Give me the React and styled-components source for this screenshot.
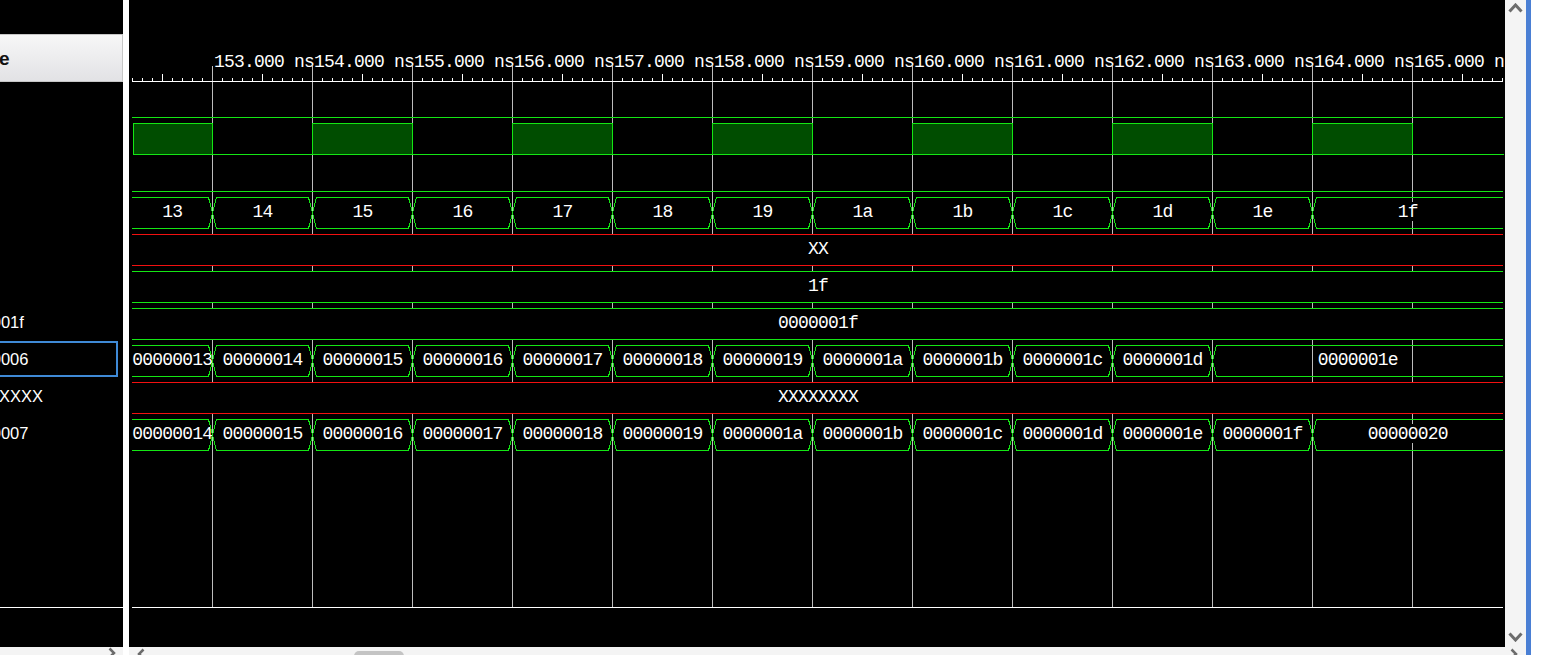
import React from 'react';
import styled, { createGlobalStyle } from 'styled-components';

const GlobalStyle = createGlobalStyle`
	html, body {
		margin: 0;
		padding: 0;
		background: #ffffff;
		overflow: hidden;
	}
	body {
		font-family: "Liberation Sans", Arial, sans-serif;
	}
`;

// wave canvas geometry, in page coordinates (the viewBox starts at CANVAS_X)
const CANVAS_X = 129;
const CANVAS_W = 1376;
const CANVAS_H = 647;
const WAVE_L = 132;
const WAVE_R = 1503;
const FIRST_ROW = 86;
const ROW_PITCH = 37;
const ROW_H = 31;
const GRID_FIRST = 212;
const GRID_STEP = 100;
const GRID_COUNT = 13;
const GRID_TOP = 66;
const GRID_BOTTOM = 607;
const RULER_Y = 81;
const CHAR_W = 10;

const GREEN = '#14e614';
const DARK_GREEN = '#004d00';
const RED = '#f21010';
const GRID = '#bdbdbd';

const rowTop = (i) => FIRST_ROW + ROW_PITCH * i;
const gridX = (k) => GRID_FIRST + GRID_STEP * k;

const hexRange = (from, count, pad) =>
	Array.from({ length: count }, (_, i) => (from + i).toString(16).padStart(pad, '0'));

const signals = [
	{ kind: 'low' },
	{ kind: 'clock' },
	{ kind: 'low' },
	{ kind: 'bus', values: hexRange(0x13, 13, 2) },
	{ kind: 'const', value: 'XX', color: RED },
	{ kind: 'const', value: '1f', color: GREEN },
	{ kind: 'const', value: '0000001f', color: GREEN },
	{ kind: 'bus', values: hexRange(0x13, 12, 8) },
	{ kind: 'const', value: 'XXXXXXXX', color: RED },
	{ kind: 'bus', values: hexRange(0x14, 13, 8) },
];

// value column is scrolled right, so short values are out of view
const values = ['', '', '', '', '', '', '0000001f', '00000006', 'XXXXXXXX', '00000007'];
const SELECTED = 7;

/* ---------- page frame ---------- */

const Window = styled.div`
	display: flex;
	width: 1545px;
	height: 655px;
	background: #ffffff;
	overflow: hidden;
`;

const ValuePane = styled.div`
	width: 123px;
	flex-shrink: 0;
	display: flex;
	flex-direction: column;
	background: #000000;
	overflow: hidden;
`;

const PaneTop = styled.div`
	height: 34px;
	flex-shrink: 0;
`;

const ColumnHeader = styled.div`
	height: 48px;
	flex-shrink: 0;
	box-sizing: border-box;
	display: flex;
	align-items: center;
	border: 1px solid #c6c6c6;
	border-left: none;
	background: linear-gradient(#f7f7f7, #e2e2e5);
	overflow: hidden;
	white-space: nowrap;
`;

const HeaderLabel = styled.span`
	margin-left: -40px;
	padding-top: 1px;
	font: bold 19px "Liberation Sans", Arial, sans-serif;
	color: #111111;
`;

const ValueList = styled.div`
	flex: 1;
	display: flex;
	flex-direction: column;
	overflow: hidden;
`;

const ValueRow = styled.div`
	height: 37px;
	flex-shrink: 0;
	display: flex;
	align-items: flex-start;
`;

const ValueBox = styled.div`
	width: 122px;
	height: 36px;
	margin-left: -4px;
	padding-top: 1px;
	box-sizing: border-box;
	display: flex;
	align-items: center;
	border: 2px solid ${(p) => (p.$selected ? '#3f8ad6' : 'transparent')};
	overflow: hidden;
	white-space: nowrap;
`;

const ValueText = styled.span`
	margin-left: -43px;
	font-size: 16.5px;
	color: #ffffff;
`;

const EndLine = styled.div`
	height: 1px;
	flex-shrink: 0;
	background: #ffffff;
`;

const PaneFoot = styled.div`
	height: 39px;
	flex-shrink: 0;
`;

const HScroll = styled.div`
	height: 8px;
	flex-shrink: 0;
	display: flex;
	align-items: flex-start;
	justify-content: ${(p) => (p.$end ? 'flex-end' : 'flex-start')};
	padding: 0 ${(p) => (p.$end ? '7px' : '0')} 0 0;
	background: #f4f4f4;
	overflow: hidden;
`;

const Splitter = styled.div`
	width: 6px;
	flex-shrink: 0;
	background: #ffffff;
`;

const WavePane = styled.div`
	width: 1397px;
	flex-shrink: 0;
	display: flex;
	flex-direction: column;
`;

const WaveBody = styled.div`
	height: ${CANVAS_H}px;
	display: flex;
`;

const WaveCanvas = styled.svg`
	display: block;
	flex-shrink: 0;
	background: #000000;
`;

const VScroll = styled.div`
	width: 21px;
	flex-shrink: 0;
	box-sizing: border-box;
	display: flex;
	flex-direction: column;
	justify-content: space-between;
	align-items: center;
	padding: 3px 0 5px;
	background: #f4f4f4;
`;

const Track = styled.div`
	flex: 1;
	display: flex;
	align-items: flex-start;
	padding-top: 4px;
`;

const Thumb = styled.div`
	width: 50px;
	height: 10px;
	margin-left: ${(p) => p.$offset}px;
	border-radius: 5px;
	background: #c4c4c4;
`;

const ArrowSlot = styled.div`
	display: flex;
	margin: 1px ${(p) => p.$right || 0}px 0 ${(p) => p.$left || 0}px;
`;

const FocusEdge = styled.div`
	width: 5px;
	flex-shrink: 0;
	background: #4a7fd4;
`;

const WaveText = styled.text`
	font-family: "Liberation Mono", "DejaVu Sans Mono", monospace;
	font-size: 18px;
	letter-spacing: -0.8px;
	fill: #ffffff;
`;

/* ---------- small drawings ---------- */

const Chevron = ({ dir, size = 15, color = '#6c6c6c', weight = 3 }) => {
	const h = Math.round(size * 0.66);
	const pts = {
		up: `1.5,${h - 1.5} ${size / 2},2 ${size - 1.5},${h - 1.5}`,
		down: `1.5,1.5 ${size / 2},${h - 2} ${size - 1.5},1.5`,
		left: `${h - 1.5},1.5 2,${size / 2} ${h - 1.5},${size - 1.5}`,
		right: `1.5,1.5 ${h - 2},${size / 2} 1.5,${size - 1.5}`,
	}[dir];
	const horizontal = dir === 'up' || dir === 'down';
	return (
		<svg
			width={horizontal ? size : h}
			height={horizontal ? h : size}
			viewBox={`0 0 ${horizontal ? size : h} ${horizontal ? h : size}`}
		>
			<polyline points={pts} fill="none" stroke={color} strokeWidth={weight} />
		</svg>
	);
};

/* ---------- wave pieces ---------- */

const Ruler = () => {
	const ticks = [];
	for (let x = WAVE_L; x < WAVE_R; x += 10) {
		if ((x - GRID_FIRST) % GRID_STEP === 0) continue;
		const tall = (x - GRID_FIRST - 50) % GRID_STEP === 0;
		ticks.push(
			<line key={x} x1={x + 0.5} x2={x + 0.5} y1={tall ? 74 : 78} y2={RULER_Y} stroke="#ffffff" />
		);
	}
	const labels = Array.from({ length: GRID_COUNT + 1 }, (_, i) => (
		<WaveText key={i} x={gridX(i) + 2} y={67}>
			{`${153 + i}.000 ns`}
		</WaveText>
	));
	return (
		<g>
			<line x1={WAVE_L} x2={WAVE_R} y1={RULER_Y + 0.5} y2={RULER_Y + 0.5} stroke="#ffffff" />
			{ticks}
			{labels}
		</g>
	);
};

const GridLines = () => (
	<g>
		{Array.from({ length: GRID_COUNT }, (_, k) => (
			<line
				key={k}
				x1={gridX(k) + 0.5}
				x2={gridX(k) + 0.5}
				y1={GRID_TOP}
				y2={GRID_BOTTOM}
				stroke={GRID}
			/>
		))}
	</g>
);

// value text is painted opaque, hiding the grid behind it
const ValueLabel = ({ x, top, children }) => {
	const w = String(children).length * CHAR_W;
	return (
		<g>
			<rect x={x - w / 2} y={top + 5} width={w} height={19} fill="#000000" />
			<WaveText x={x} y={top + 20} textAnchor="middle">
				{children}
			</WaveText>
		</g>
	);
};

const LowWave = ({ top }) => (
	<line x1={WAVE_L} x2={WAVE_R} y1={top + ROW_H + 0.5} y2={top + ROW_H + 0.5} stroke={GREEN} />
);

const ClockWave = ({ top }) => {
	const hi = top + 0.5;
	const lo = top + ROW_H + 0.5;
	const parts = [];
	for (let k = -1; k < GRID_COUNT; k += 2) {
		const a = k < 0 ? WAVE_L + 1 : gridX(k);
		const b = gridX(k + 1);
		parts.push(
			<rect key={`h${k}`} x={a + 0.5} y={hi} width={b - a} height={ROW_H} fill={DARK_GREEN} stroke={GREEN} />
		);
		const c = k + 2 < GRID_COUNT ? gridX(k + 2) : WAVE_R;
		parts.push(<line key={`l${k}`} x1={b + 0.5} x2={c + 0.5} y1={lo} y2={lo} stroke={GREEN} />);
	}
	return <g>{parts}</g>;
};

const busPath = (a, b, top, first, last) => {
	const t = top + 0.5;
	const bt = top + ROW_H + 0.5;
	const m = top + ROW_H / 2 + 0.5;
	let d = first ? `M${a},${t}` : `M${a},${m}L${a + 4},${t}`;
	d += last ? `L${b},${t}M${b},${bt}` : `L${b - 4},${t}L${b},${m}L${b - 4},${bt}`;
	d += first ? `L${a},${bt}` : `L${a + 4},${bt}L${a},${m}`;
	return d;
};

const BusWave = ({ top, values: vals }) => {
	const segs = vals.map((v, i) => {
		const first = i === 0;
		const last = i === vals.length - 1;
		const a = first ? WAVE_L : gridX(i - 1) + 0.5;
		const b = last ? WAVE_R : gridX(i) + 0.5;
		return { v, a, b, first, last };
	});
	return (
		<g>
			{segs.map((s, i) => (
				<ValueLabel key={`t${i}`} x={(s.a + s.b) / 2} top={top}>
					{s.v}
				</ValueLabel>
			))}
			{segs.map((s, i) => (
				<path key={`p${i}`} d={busPath(s.a, s.b, top, s.first, s.last)} fill="none" stroke={GREEN} />
			))}
		</g>
	);
};

const ConstWave = ({ top, value, color }) => (
	<g>
		<rect x={WAVE_L} y={top + 1} width={WAVE_R - WAVE_L} height={ROW_H - 1} fill="#000000" />
		<line x1={WAVE_L} x2={WAVE_R} y1={top + 0.5} y2={top + 0.5} stroke={color} />
		<line x1={WAVE_L} x2={WAVE_R} y1={top + ROW_H + 0.5} y2={top + ROW_H + 0.5} stroke={color} />
		<ValueLabel x={(WAVE_L + WAVE_R) / 2 + 0.5} top={top}>
			{value}
		</ValueLabel>
	</g>
);

const Signal = ({ signal, index }) => {
	const top = rowTop(index);
	if (signal.kind === 'low') return <LowWave top={top} />;
	if (signal.kind === 'clock') return <ClockWave top={top} />;
	if (signal.kind === 'bus') return <BusWave top={top} values={signal.values} />;
	return <ConstWave top={top} value={signal.value} color={signal.color} />;
};

export default function App() {
	return (
		<Window>
			<GlobalStyle />
			<ValuePane>
				<PaneTop />
				<ColumnHeader>
					<HeaderLabel>Value</HeaderLabel>
				</ColumnHeader>
				<ValueList>
					{values.map((v, i) => (
						<ValueRow key={i}>
							<ValueBox $selected={i === SELECTED}>
								{v && <ValueText>{v}</ValueText>}
							</ValueBox>
						</ValueRow>
					))}
				</ValueList>
				<EndLine />
				<PaneFoot />
				<HScroll $end>
					<Chevron dir="right" size={12} weight={2.5} />
				</HScroll>
			</ValuePane>
			<Splitter />
			<WavePane>
				<WaveBody>
					<WaveCanvas
						width={CANVAS_W}
						height={CANVAS_H}
						viewBox={`${CANVAS_X} 0 ${CANVAS_W} ${CANVAS_H}`}
						shapeRendering="crispEdges"
					>
						<GridLines />
						<Ruler />
						{signals.map((s, i) => (
							<Signal key={i} signal={s} index={i} />
						))}
						<line
							x1={WAVE_L}
							x2={WAVE_R}
							y1={GRID_BOTTOM + 0.5}
							y2={GRID_BOTTOM + 0.5}
							stroke="#ffffff"
						/>
					</WaveCanvas>
					<VScroll>
						<Chevron dir="up" />
						<Chevron dir="down" />
					</VScroll>
				</WaveBody>
				<HScroll>
					<ArrowSlot $left={8}>
						<Chevron dir="left" size={12} weight={2.5} />
					</ArrowSlot>
					<Track>
						<Thumb $offset={209} />
					</Track>
					<ArrowSlot $right={8}>
						<Chevron dir="right" size={12} weight={2.5} />
					</ArrowSlot>
				</HScroll>
			</WavePane>
			<FocusEdge />
		</Window>
	);
}
